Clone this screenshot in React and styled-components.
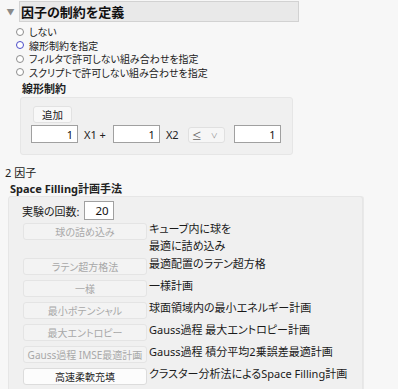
import React from 'react'
import styled, { createGlobalStyle } from 'styled-components'

const GlobalStyle = createGlobalStyle`
  html, body {
    margin: 0;
    padding: 0;
    background: #f7f7f7;
  }
  body {
    font-family: "Noto Sans", "Noto Sans CJK JP", sans-serif;
    font-feature-settings: "palt";
    color: #1a1a1a;
    font-size: 11px;
  }
`

const Page = styled.div`
  width: 398px;
  height: 389px;
  overflow: hidden;
  position: relative;
`

const OutlineHeader = styled.div`
  display: flex;
  align-items: center;
  height: 21px;
  padding-top: 1px;
`

const Toggle = styled.span`
  width: 17px;
  display: flex;
  justify-content: center;
  color: #8a8a8a;
  font-size: 8px;
  padding-left: 2px;
`

const TitleBar = styled.div`
  width: 277px;
  height: 19px;
  background: #e9e9e9;
  border: 1px solid #d2d2d2;
  display: flex;
  align-items: center;
  padding-left: 1px;
  font-size: 13px;
  font-weight: bold;
  color: #111;
`

const RadioList = styled.div`
  display: flex;
  flex-direction: column;
  padding: 3px 0 0 16px;
`

const RadioRow = styled.label`
  display: flex;
  align-items: center;
  height: 13.5px;
  font-size: 10px;
  color: #222;
`

const RadioDot = styled.span`
  width: 6px;
  height: 6px;
  border-radius: 50%;
  border: ${p => (p.checked ? '1.5px solid #4b4bc8' : '1px solid #8c8c8c')};
  background: #fff;
  margin-right: 5px;
  box-sizing: content-box;
`

const SubLabel = styled.div`
  font-size: 11px;
  font-weight: bold;
  padding: 1px 0 0 22px;
  height: 16px;
  color: #222;
`

const ConstraintPanel = styled.div`
  margin: 1px 0 0 20px;
  width: 273px;
  height: 58px;
  background: #f0f0f0;
  border: 1px solid #e6e6e6;
  border-radius: 3px;
  padding: 8px 0 0 10px;
  box-sizing: border-box;
`

const SmallButton = styled.div`
  width: 39px;
  height: 17px;
  margin-left: 2px;
  background: #f8f8f8;
  border: 1px solid #e2e2e2;
  border-radius: 3px;
  box-sizing: border-box;
  display: flex;
  align-items: center;
  justify-content: center;
  font-size: 10.5px;
  color: #222;
`

const ExprRow = styled.div`
  display: flex;
  align-items: center;
  margin-top: 2px;
`

const NumInput = styled.div`
  width: 47px;
  height: 18px;
  background: #fff;
  border: 1px solid #a0a0a0;
  box-sizing: border-box;
  display: flex;
  align-items: center;
  justify-content: flex-end;
  padding-right: 4px;
  font-size: 11px;
  color: #111;
`

const Term = styled.span`
  font-size: 11px;
  color: #222;
  margin: 0 7px 0 6px;
`

const Select = styled.div`
  width: 37px;
  height: 16px;
  margin: 2px 9px 0 2px;
  background: #f6f6f6;
  border: 1px solid #e0e0e0;
  border-radius: 3px;
  box-sizing: border-box;
  display: flex;
  align-items: center;
  justify-content: space-between;
  padding: 0 6px 0 3px;
  font-size: 10px;
  color: #666;
`

const Chevron = styled.span`
  font-size: 7px;
  color: #888;
`

const FactorLabel = styled.div`
  font-size: 11px;
  color: #222;
  padding: 9px 0 0 5px;
  height: 16px;
`

const MethodLabel = styled.div`
  font-size: 11px;
  font-weight: bold;
  color: #222;
  padding: 0 0 0 10px;
  height: 16px;
`

const MethodPanel = styled.div`
  margin-left: 8px;
  width: 355px;
  height: 220px;
  background: #f0f0f0;
  border: 1px solid #e6e6e6;
  border-radius: 3px;
  box-shadow: 1px 0 0 #e9e9e9;
  box-sizing: border-box;
  padding: 4px 0 0 13px;
`

const RunsRow = styled.div`
  display: flex;
  align-items: center;
  font-size: 11px;
  color: #222;
  margin-bottom: 3px;
`

const RunsInput = styled(NumInput)`
  margin-left: 4px;
  width: 30px;
  height: 19px;
  font-size: 11.5px;
`

const MethodRow = styled.div`
  display: flex;
  align-items: flex-start;
  margin-top: ${p => p.gap}px;
`

const MethodButton = styled.div`
  width: 124px;
  height: 17px;
  flex-shrink: 0;
  margin-left: 1px;
  background: ${p => (p.enabled ? '#fcfcfc' : '#f3f3f3')};
  border: 1px solid ${p => (p.enabled ? '#dcdcdc' : '#e4e4e4')};
  border-radius: 3px;
  box-sizing: border-box;
  display: flex;
  align-items: center;
  justify-content: center;
  font-size: 10px;
  color: ${p => (p.enabled ? '#222' : '#a8a8a8')};
  white-space: nowrap;
`

const Description = styled.div`
  margin-left: 2px;
  font-size: 11px;
  line-height: 17px;
  margin-top: -3px;
  color: #1a1a1a;
  white-space: nowrap;
`

const methods = [
  { label: '球の詰め込み', desc: ['キューブ内に球を', '最適に詰め込み'] },
  { label: 'ラテン超方格法', desc: ['最適配置のラテン超方格'] },
  { label: '一様', desc: ['一様計画'] },
  { label: '最小ポテンシャル', desc: ['球面領域内の最小エネルギー計画'] },
  { label: '最大エントロピー', desc: ['Gauss過程 最大エントロピー計画'] },
  { label: 'Gauss過程 IMSE最適計画', desc: ['Gauss過程 積分平均2乗誤差最適計画'] },
  { label: '高速柔軟充填', desc: ['クラスター分析法によるSpace Filling計画'], enabled: true },
]

const radios = [
  { text: 'しない' },
  { text: '線形制約を指定', checked: true },
  { text: 'フィルタで許可しない組み合わせを指定' },
  { text: 'スクリプトで許可しない組み合わせを指定' },
]

export default function App() {
  return (
    <Page>
      <GlobalStyle />
      <OutlineHeader>
        <Toggle>▼</Toggle>
        <TitleBar>因子の制約を定義</TitleBar>
      </OutlineHeader>
      <RadioList>
        {radios.map(r => (
          <RadioRow key={r.text}>
            <RadioDot checked={r.checked} />
            {r.text}
          </RadioRow>
        ))}
      </RadioList>
      <SubLabel>線形制約</SubLabel>
      <ConstraintPanel>
        <SmallButton>追加</SmallButton>
        <ExprRow>
          <NumInput>1</NumInput>
          <Term>X1 +</Term>
          <NumInput>1</NumInput>
          <Term>X2</Term>
          <Select>
            ≤<Chevron>∨</Chevron>
          </Select>
          <NumInput>1</NumInput>
        </ExprRow>
      </ConstraintPanel>
      <FactorLabel>2 因子</FactorLabel>
      <MethodLabel>Space Filling計画手法</MethodLabel>
      <MethodPanel>
        <RunsRow>
          実験の回数:
          <RunsInput>20</RunsInput>
        </RunsRow>
        {methods.map((m, i) => (
          <MethodRow key={m.label} gap={i === 0 ? 2 : i === 1 ? 4 : 5}>
            <MethodButton enabled={m.enabled}>{m.label}</MethodButton>
            <Description>
              {m.desc.map(d => (
                <div key={d}>{d}</div>
              ))}
            </Description>
          </MethodRow>
        ))}
      </MethodPanel>
    </Page>
  )
}
